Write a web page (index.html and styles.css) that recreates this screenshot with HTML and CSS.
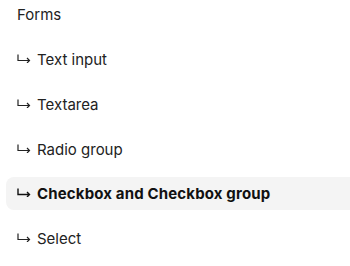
FILE: index.html
```html
<!DOCTYPE html>
<html>
<head>
    <meta charset="UTF-8">
    <title>Forms</title>
    <link rel="stylesheet" href="styles.css">
</head>
<body>
    <nav class="sidebar">
        <div class="section-title">Forms</div>
        <ul class="nav-list">
            <li class="nav-item"><svg class="arrow" width="14" height="9" viewBox="0 0 14 9"><path d="M1 0.5V6.5H12.5M10 4L12.5 6.5L10 9" fill="none" stroke="currentColor" stroke-width="1.2"/></svg>Text input</li>
            <li class="nav-item"><svg class="arrow" width="14" height="9" viewBox="0 0 14 9"><path d="M1 0.5V6.5H12.5M10 4L12.5 6.5L10 9" fill="none" stroke="currentColor" stroke-width="1.2"/></svg>Textarea</li>
            <li class="nav-item"><svg class="arrow" width="14" height="9" viewBox="0 0 14 9"><path d="M1 0.5V6.5H12.5M10 4L12.5 6.5L10 9" fill="none" stroke="currentColor" stroke-width="1.2"/></svg>Radio group</li>
            <li class="nav-item active"><svg class="arrow" width="14" height="9" viewBox="0 0 14 9"><path d="M1 0.5V6.5H12.5M10 4L12.5 6.5L10 9" fill="none" stroke="currentColor" stroke-width="1.4"/></svg>Checkbox and Checkbox group</li>
            <li class="nav-item"><svg class="arrow" width="14" height="9" viewBox="0 0 14 9"><path d="M1 0.5V6.5H12.5M10 4L12.5 6.5L10 9" fill="none" stroke="currentColor" stroke-width="1.2"/></svg>Select</li>
        </ul>
    </nav>
</body>
</html>
```

FILE: styles.css
```css
body {
    margin: 0;
    font-family: 'Inter', 'Noto Sans', sans-serif;
    font-size: 15px;
    color: #222;
    background: #fff;
}
.sidebar {
    padding-left: 6px;
}
.section-title {
    height: 30px;
    line-height: 30px;
    padding-left: 11px;
}
.nav-list {
    list-style: none;
    margin: 13px 0 0 0;
    padding: 0;
    display: flex;
    flex-direction: column;
    gap: 11.8px;
}
.nav-item {
    height: 33px;
    display: flex;
    align-items: center;
    padding-left: 11px;
    margin-right: -10px;
    border-radius: 8px;
}
.arrow {
    margin-right: 6px;
    margin-top: -2px;
}
.active {
    background: #f4f4f4;
    font-weight: 700;
    letter-spacing: 0.15px;
    color: #111;
}
```
